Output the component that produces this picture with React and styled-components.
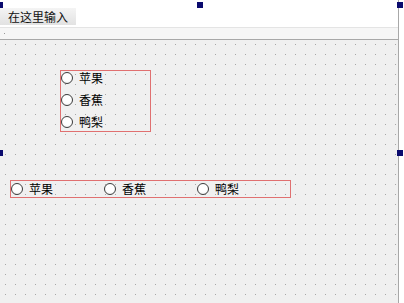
import React from "react";
import styled, { createGlobalStyle } from "styled-components";

const Global = createGlobalStyle`
  html, body { margin: 0; padding: 0; background: #ffffff; }
  body { font-family: "Noto Sans CJK SC", "Liberation Sans", sans-serif; }
`;

const Page = styled.div`
  position: relative;
  width: 404px;
  height: 303px;
  overflow: hidden;
  background: #ffffff;
`;

const Form = styled.div`
  width: 398px;
  height: 303px;
  border-right: 1px solid #a8a8a8;
  display: flex;
  flex-direction: column;
`;

const MenuBar = styled.div`
  height: 27px;
  display: flex;
  align-items: flex-end;
  padding-bottom: 2px;
  box-sizing: border-box;
  background: #ffffff;
`;

const MenuItem = styled.div`
  height: 17px;
  width: 76px;
  padding-left: 8px;
  box-sizing: border-box;
  display: flex;
  align-items: center;
  font-size: 12px;
  line-height: 1;
  color: #111;
  background: linear-gradient(to bottom, #f4f4f4, #e2e2e2);
`;

const ToolStrip = styled.div`
  height: 11px;
  border-top: 1px solid #e4e4e4;
  border-bottom: 1px solid #a8a8a8;
  background: #f6f6f6;
  display: flex;
  align-items: center;
  padding-left: 4px;
`;

const StripDot = styled.span`
  width: 1px;
  height: 1px;
  background: #999;
`;

const Canvas = styled.div`
  flex: 1;
  display: flex;
  flex-direction: column;
  align-items: flex-start;
  padding-top: 30px;
  background-color: #f0f0f0;
  background-image: radial-gradient(circle at 0.5px 0.5px, #a6a6a6 0.7px, transparent 0.8px);
  background-size: 10px 10px;
  background-position: 5px 4px;
`;

const VerticalGroup = styled.div`
  margin-left: 60px;
  width: 91px;
  height: 62px;
  border: 1px solid #e07070;
  box-sizing: border-box;
  display: flex;
  flex-direction: column;
  gap: 8px;
`;

const HorizontalGroup = styled.div`
  margin-left: 10px;
  margin-top: 48px;
  width: 281px;
  height: 18px;
  border: 1px solid #e07070;
  box-sizing: border-box;
  display: flex;
  align-items: center;
`;

const RadioRow = styled.label`
  display: flex;
  align-items: center;
  height: 14px;
  width: ${(p) => (p.$cell ? "95px" : "auto")};
  font-size: 12px;
  line-height: 1;
  color: #000;
  gap: 6px;
`;

const RadioCircle = styled.span`
  width: 12px;
  height: 12px;
  border-radius: 50%;
  border: 1px solid #3c3c3c;
  box-sizing: border-box;
  background: radial-gradient(circle at 50% 40%, #ffffff 50%, #e6e6e6 100%);
  flex: none;
`;

const Handle = styled.div`
  position: absolute;
  left: ${(p) => p.$x}px;
  top: ${(p) => p.$y}px;
  width: 6px;
  height: 6px;
  background: #0a0a6e;
`;

const fruits = ["苹果", "香蕉", "鸭梨"];
const handles = [
  [-3, 2],
  [197, 2],
  [397, 2],
  [-3, 150],
  [397, 150],
];

export default function App() {
  return (
    <>
      <Global />
      <Page>
        <Form>
          <MenuBar>
            <MenuItem>在这里输入</MenuItem>
          </MenuBar>
          <ToolStrip>
            <StripDot />
          </ToolStrip>
          <Canvas>
            <VerticalGroup>
              {fruits.map((f) => (
                <RadioRow key={f}>
                  <RadioCircle />
                  {f}
                </RadioRow>
              ))}
            </VerticalGroup>
            <HorizontalGroup>
              {fruits.map((f) => (
                <RadioRow key={f} $cell>
                  <RadioCircle />
                  {f}
                </RadioRow>
              ))}
            </HorizontalGroup>
          </Canvas>
        </Form>
        {handles.map(([x, y]) => (
          <Handle key={`${x}-${y}`} $x={x} $y={y} />
        ))}
      </Page>
    </>
  );
}
